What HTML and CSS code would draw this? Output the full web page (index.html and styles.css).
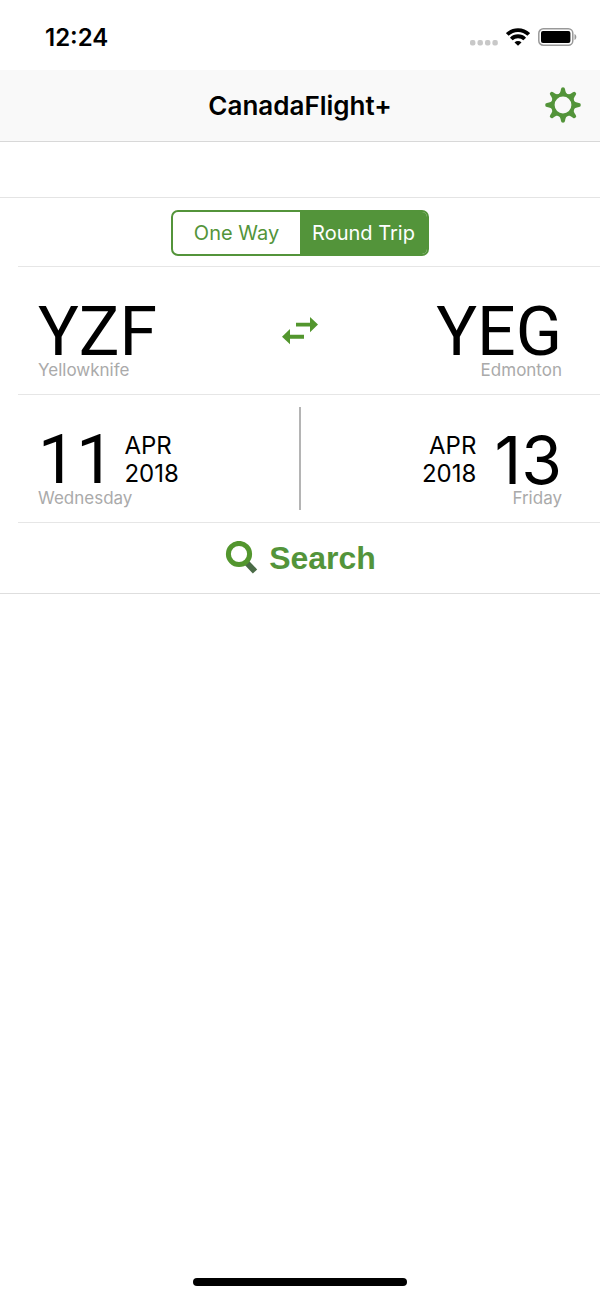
FILE: index.html
```html
<!DOCTYPE html>
<html lang="en">
<head>
<meta charset="utf-8">
<meta name="viewport" content="width=device-width, initial-scale=1">
<title>CanadaFlight+</title>
<link rel="stylesheet" href="styles.css">
</head>
<body>
<div class="status">
  <span class="clock">12:24</span>
  <div class="indicators">
    <svg width="28" height="6" viewBox="0 0 28 6" fill="#c8c8c8" aria-hidden="true">
      <rect x="0" y="0" width="5.4" height="5.4" rx="2"/><rect x="7.5" y="0" width="5.4" height="5.4" rx="2"/><rect x="15" y="0" width="5.4" height="5.4" rx="2"/><rect x="22.4" y="0" width="5.4" height="5.4" rx="2"/>
    </svg>
    <svg width="24" height="18" viewBox="0 0 24 18" aria-hidden="true">
      <g fill="none" stroke="#000" stroke-width="3.8"><path d="M1.300 6.500a15.200 15.200 0 0 1 21.400 0"/><path d="M5.300 11a9.500 9.500 0 0 1 13.400 0"/></g>
      <path d="M12 17.800 8.500 14.500a5 5 0 0 1 7 0z"/>
    </svg>
    <svg width="40" height="18" viewBox="0 0 40 18" aria-hidden="true">
      <rect x=".8" y=".8" width="34" height="16.4" rx="4.5" fill="none" stroke="#999" stroke-width="1.5"/>
      <rect x="3" y="3" width="29.400" height="12" rx="2"/>
      <path d="M36.500 6c2.400.8 2.400 5.200 0 6z" fill="#999"/>
    </svg>
  </div>
</div>
<header class="navbar">
  <h1 class="title">CanadaFlight+</h1>
  <button class="settings" type="button" aria-label="Settings">
    <svg width="36" height="36" viewBox="-18 -18 36 36" fill="#53943a" aria-hidden="true">
      <defs><path id="tooth" d="M-5-10C-3.200-11.500-2.400-13-2-16Q-1.800-17.800 0-17.800T2-16C2.400-13 3.200-11.500 5-10z"/></defs>
      <circle r="10.200" fill="none" stroke="#53943a" stroke-width="3.600"/>
      <use href="#tooth"/><use href="#tooth" transform="rotate(90)"/><use href="#tooth" transform="rotate(180)"/><use href="#tooth" transform="rotate(270)"/>
      <use href="#tooth" transform="rotate(45)"/><use href="#tooth" transform="rotate(135)"/><use href="#tooth" transform="rotate(225)"/><use href="#tooth" transform="rotate(315)"/>
    </svg>
  </button>
</header>
<main>
  <form class="search-form">
    <div class="trip-row">
      <div class="segmented" role="radiogroup" aria-label="Trip type">
        <label class="segment"><input class="segment-input" type="radio" name="trip" value="one"><span class="segment-text">One Way</span></label>
        <label class="segment"><input class="segment-input" type="radio" name="trip" value="round" checked><span class="segment-text">Round Trip</span></label>
      </div>
    </div>
    <div class="row">
      <button class="field" type="button"><span class="big code">YZF</span><span class="caption">Yellowknife</span></button>
      <button class="swap" type="button" aria-label="Swap airports">
        <svg width="36" height="28" viewBox="0 0 36 28" fill="#53962e" aria-hidden="true"><path d="M14 5.700h14V0l8 7.500-8 7.700V9.500H14zM22 17.700v4H8v5.600l-8-7.500L8 12v5.700z"/></svg>
      </button>
      <button class="field field-end" type="button"><span class="big code">YEG</span><span class="caption">Edmonton</span></button>
    </div>
    <div class="row">
      <button class="field" type="button">
        <span class="date"><span class="big code">11</span><span class="month"><span>APR</span><span>2018</span></span></span>
        <span class="caption">Wednesday</span>
      </button>
      <span class="divider"></span>
      <button class="field field-end" type="button">
        <span class="date"><span class="month"><span>APR</span><span>2018</span></span><span class="big">13</span></span>
        <span class="caption">Friday</span>
      </button>
    </div>
    <button class="search" type="submit">
      <svg width="34" height="34" viewBox="0 0 34 34" aria-hidden="true">
        <path d="m22 21 9 9.500" stroke="#4a6b46" stroke-width="6"/>
        <circle cx="15" cy="13" r="10.600" fill="none" stroke="#53962e" stroke-width="5"/>
      </svg>
      <span>Search</span>
    </button>
  </form>
</main>
<footer class="home"><span class="home-bar"></span></footer>
</body>
</html>
```
FILE: styles.css
```css
* { box-sizing: border-box; }
body {
  margin: 0;
  min-height: 100vh;
  display: flex;
  flex-direction: column;
  background: #fff;
  color: #000;
  font-family: Inter, "Liberation Sans", sans-serif;
}
button {
  margin: 0;
  padding: 0;
  border: 0;
  background: none;
  color: inherit;
  font: inherit;
  cursor: pointer;
}
svg { display: block; }
.status {
  display: flex;
  justify-content: space-between;
  align-items: center;
  height: 70px;
  padding: 4px 22px 0 45px;
}
.clock { font-size: 24px; font-weight: 600; }
.indicators { display: flex; align-items: center; gap: 8px; }
.indicators > :first-child { margin-top: 12px; }
.navbar {
  display: grid;
  grid-template-columns: 1fr auto 1fr;
  align-items: center;
  height: 72px;
  padding: 0 19px 1px;
  background: #f9f9f9;
  border-bottom: 1px solid #d8d8d8;
}
.title { grid-column: 2; margin: 0; font-size: 26px; font-weight: 600; }
.settings { justify-self: end; }
.search-form {
  margin-top: 55px;
  border-top: 1px solid #e4e4e4;
  border-bottom: 1px solid #dedede;
}
.trip-row, .row { margin-left: 18px; border-bottom: 1px solid #e6e6e6; }
.trip-row {
  display: flex;
  justify-content: center;
  padding: 12px 18px 10px 0;
}
.segmented {
  display: grid;
  grid-template-columns: 1fr 1fr;
  width: 258px;
  height: 46px;
  border: 2px solid #53943a;
  border-radius: 7px;
  overflow: hidden;
}
.segment { position: relative; display: grid; cursor: pointer; }
.segment-input { position: absolute; inset: 0; margin: 0; opacity: 0; }
.segment-text {
  display: grid;
  place-items: center;
  color: #53943a;
  font-size: 20px;
}
.segment-input:checked + .segment-text { background: #53943a; color: #fff; }
.row {
  display: grid;
  grid-template-columns: 1fr auto 1fr;
  padding: 0 38px 0 20px;
}
.field {
  display: flex;
  flex-direction: column;
  align-items: flex-start;
  padding: 37px 0 14px;
}
.field-end { align-items: flex-end; }
.big { font-size: 66px; line-height: 56px; }
.code { font-family: Roboto, Inter, sans-serif; font-size: 68px; }
.caption { color: #aaa; font-size: 17px; line-height: 20px; }
.date { display: flex; gap: 10px; }
.field-end .date { gap: 18px; }
.month {
  display: flex;
  flex-direction: column;
  font-size: 24px;
  line-height: 28px;
  text-align: left;
}
.field-end .month { text-align: right; }
.swap { align-self: center; }
.divider { width: 2px; margin: 12px 0; background: #b4b4b4; }
.search {
  display: flex;
  justify-content: center;
  align-items: center;
  gap: 11px;
  width: 100%;
  height: 70px;
  color: #53943a;
  font: bold 32px "Liberation Sans", Arial, sans-serif;
}
.home { display: flex; justify-content: center; margin-top: auto; padding-bottom: 13px; }
.home-bar { width: 214px; height: 8px; border-radius: 4px; background: #000; }
```
